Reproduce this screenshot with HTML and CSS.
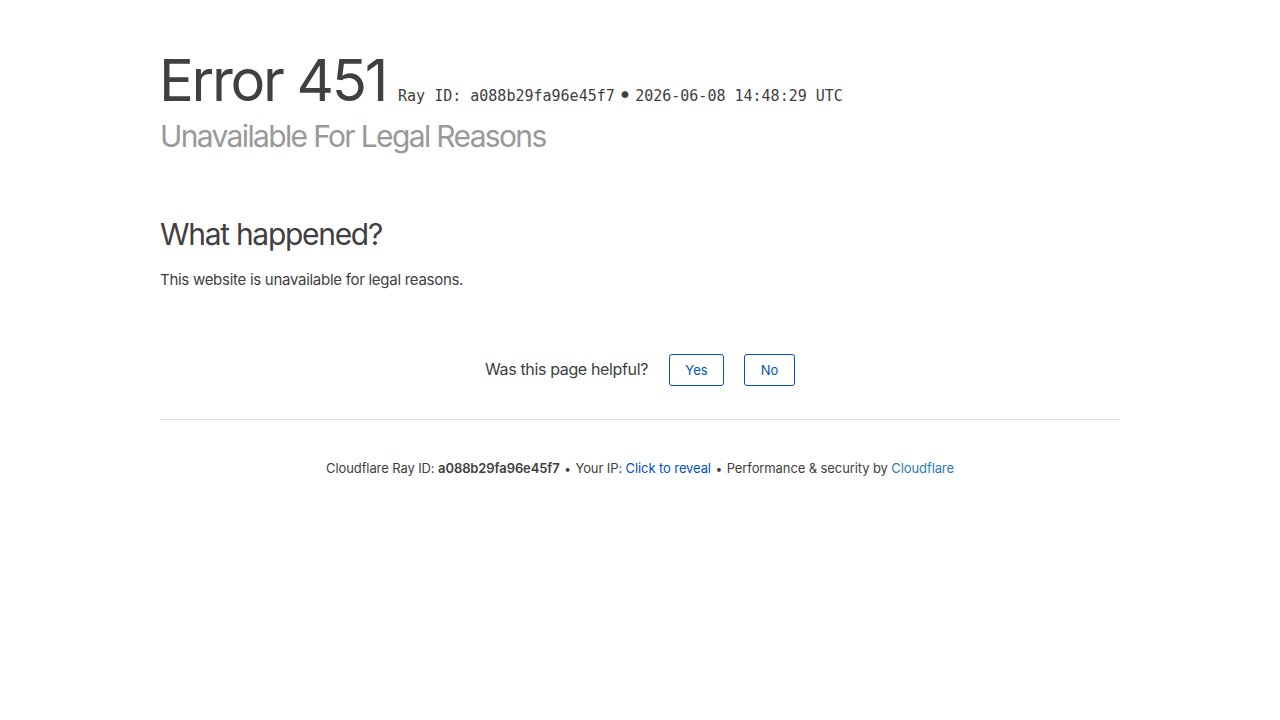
FILE: index.html
```html
<!DOCTYPE html>
<html lang="en">
<head>
<meta charset="utf-8">
<title>Error 451</title>
<link rel="stylesheet" href="styles.css">
</head>
<body>
<main class="page">
  <header class="head">
    <div class="title-row">
      <h1 class="title">Error 451</h1>
      <span class="meta">Ray ID: a088b29fa96e45f7</span>
      <span class="dot">•</span>
      <span class="meta">2026-06-08 14:48:29 UTC</span>
    </div>
    <h2 class="subtitle">Unavailable For Legal Reasons</h2>
  </header>
  <section class="what">
    <h2 class="what-title">What happened?</h2>
    <p class="what-text">This website is unavailable for legal reasons.</p>
  </section>
  <div class="feedback">
    <span class="feedback-q">Was this page helpful?</span>
    <button class="btn btn-yes">Yes</button>
    <button class="btn btn-no">No</button>
  </div>
  <footer class="footer">
    <p class="footer-line">Cloudflare Ray ID: <strong>a088b29fa96e45f7</strong> <span class="sep">•</span> Your IP: <a class="link" href="#">Click to reveal</a> <span class="sep">•</span> Performance &amp; security by <a class="link light" href="#">Cloudflare</a></p>
  </footer>
</main>
</body>
</html>
```
FILE: styles.css
```css
html, body {
  margin: 0;
  padding: 0;
  background: #fff;
}
body {
  font-family: Inter, "Noto Sans", "Liberation Sans", sans-serif;
  color: #404040;
}
.page {
  width: 960px;
  margin: 0 auto;
  padding-top: 44px;
}
.title-row {
  display: flex;
  align-items: baseline;
}
.title {
  margin: 0 0 0 -1px;
  font-size: 58px;
  font-weight: 400;
  line-height: 72px;
  color: #404040;
  letter-spacing: -2.3px;
}
.meta {
  font-family: "DejaVu Sans Mono", "Liberation Mono", monospace;
  font-size: 15px;
  color: #404040;
}
.title + .meta {
  margin-left: 12px;
}
.dot {
  font-size: 22px;
  line-height: 1;
  margin: 0 4px 0 4px;
  color: #404040;
}
.subtitle {
  margin: 0;
  font-size: 30px;
  font-weight: 400;
  line-height: 40px;
  color: #999;
  letter-spacing: -1.65px;
}
.what {
  margin-top: 58px;
}
.what-title {
  margin: 0;
  font-size: 30px;
  font-weight: 400;
  line-height: 40px;
  color: #404040;
  letter-spacing: -1.3px;
}
.what-text {
  margin: 15px 0 0;
  font-size: 15px;
  line-height: 22px;
  color: #404040;
  letter-spacing: -0.28px;
}
.feedback {
  margin-top: 63px;
  display: flex;
  justify-content: center;
  align-items: center;
  padding-bottom: 33px;
  border-bottom: 1px solid #dedede;
}
.feedback-q {
  font-size: 16px;
  color: #404040;
  letter-spacing: -0.36px;
  margin: 0 21px 2px 0;
}
.btn {
  font-family: inherit;
  font-size: 13px;
  color: #0051c3;
  background: #fff;
  border: 1px solid #0051c3;
  border-radius: 3px;
  height: 32px;
  padding: 0;
  cursor: pointer;
}
.btn-yes {
  width: 55px;
  margin-right: 20px;
}
.btn-no {
  width: 51px;
}
.footer {
  margin-top: 38px;
}
.footer-line {
  margin: 0;
  text-align: center;
  font-size: 13px;
  line-height: 20px;
  color: #404040;
  letter-spacing: -0.1px;
}
.footer strong {
  font-weight: 600;
}
.sep {
  font-size: 12px;
  margin: 0 1px;
}
.link {
  color: #0051c3;
  text-decoration: none;
}
.link.light {
  color: #2c7cb0;
}
```
